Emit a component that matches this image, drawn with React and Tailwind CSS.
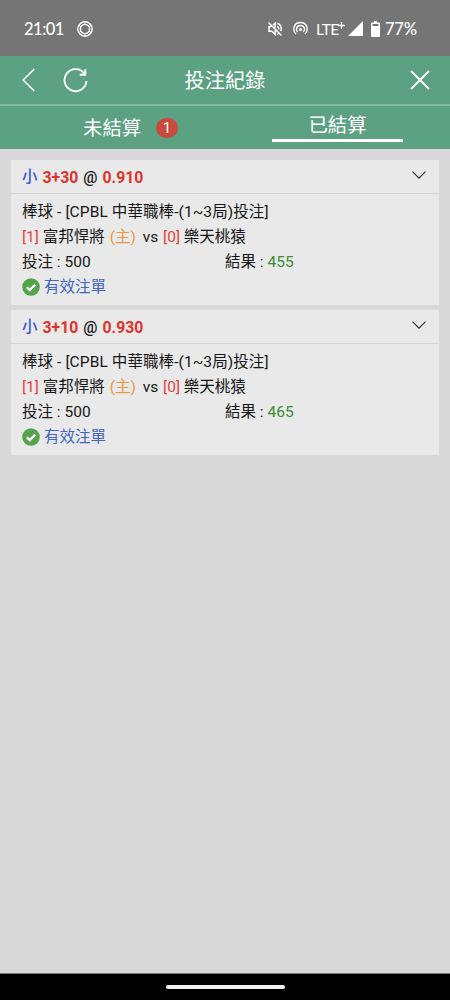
const bets = [
  { id: 1, handicap: "3+30", odds: "0.910", stake: 500, result: 455 },
  { id: 2, handicap: "3+10", odds: "0.930", stake: 500, result: 465 },
];

const StatusBar = () => (
  <div className="flex h-14 shrink-0 items-center justify-between bg-[#757575] pl-6 pr-8 pt-px text-white">
    <div className="flex items-center gap-[14px]">
      <span className="w-[39px] whitespace-nowrap font-[Lato] text-[16.500px] font-medium leading-5 tracking-[-0.5px]">21:01</span>
      <svg className="h-4 w-4" viewBox="0 0 16 16" fill="none" stroke="currentColor">
        <circle cx="8" cy="8" r="7.2" strokeWidth="1.4" />
        <circle cx="8" cy="8" r="4.8" strokeWidth="1.1" />
        <path d="M8 3.200L12.200 5.600V10.400L8 12.800L3.800 10.400V5.600zM8 1v2.200M14.300 4.500l-2.100 1.100M14.300 11.500l-2.100-1.100M8 15v-2.200M1.700 11.500l2.100-1.100M1.700 4.500l2.100 1.100" strokeWidth="0.8" />
      </svg>
    </div>

    <div className="flex items-center">
      {/* muted */}
      <svg className="mr-[10px] h-4 w-4" viewBox="0 0 16 16" fill="none" stroke="currentColor" strokeWidth="1.5">
        <path d="M1.5 1.5l13 13M4.6 5.5H2v4.8h2.8l3.4 3.2V9.2M6 4.3l2.2-2v4.2M10.3 5.4c1.1.6 1.6 1.6 1.5 3M10.3 2.2c3.4 1 4.9 4.7 3.3 8M10.3 13.4l1.2-.5" />
      </svg>
      {/* hotspot */}
      <svg className="mr-[8px] h-[15px] w-[15px]" viewBox="0 0 15 15" fill="none" stroke="currentColor" strokeWidth="1.4">
        <path d="M3 13C-.6 9.8.2 1.5 7.5 1.5S15.6 9.8 12 13" />
        <path d="M4.6 11C2.3 8.8 3.5 4.5 7.5 4.5S12.7 8.8 10.4 11" />
        <circle cx="7.5" cy="8.6" r="1.5" fill="currentColor" stroke="none" />
      </svg>
      <span className="w-[21px] whitespace-nowrap font-[Lato] text-[15.500px] leading-5 tracking-[-0.7px]">LTE</span>
      <svg className="mb-1.5 ml-px mr-[3px] h-[7px] w-[7px]" viewBox="0 0 7 7" stroke="currentColor" strokeWidth="1.3">
        <path d="M3.5 0v7M0 3.5h7" />
      </svg>
      <svg className="mr-[8px] h-[15px] w-[15px]" viewBox="0 0 15 15" fill="currentColor">
        <path d="M15 0v15H0z" />
      </svg>
      <svg className="mr-[5px] h-4 w-[9px]" viewBox="0 0 9 16">
        <path d="M3 0h3v1.5h2a1 1 0 0 1 1 1V15a1 1 0 0 1-1 1H1a1 1 0 0 1-1-1V2.500a1 1 0 0 1 1-1h2z" fill="currentColor" />
        <path d="M1.5 3h6v2h-6z" fill="#757575" />
      </svg>
      <span className="w-[33px] whitespace-nowrap font-[Lato] text-[16.500px] font-medium leading-5 tracking-[-0.2px]">77%</span>
    </div>
  </div>
);

const Header = () => (
  <header className="flex h-[50px] shrink-0 items-center border-b-2 border-[#83b8a1] pl-[22px] pr-[20px]">
    <svg className="mr-[28px] h-6 w-[13px]" viewBox="0 0 13 24" fill="none" stroke="currentColor" strokeWidth="1.7">
      <path d="M12.200 1L1.200 12l11 11" />
    </svg>
    <svg className="h-[25px] w-[25px]" viewBox="0 0 25 25" fill="none" stroke="currentColor" strokeWidth="1.9">
      <path d="M21.500 5.800A11 11 0 1 0 23.500 13" />
      <path d="M22.300 1.300v5.500h-5.500" />
    </svg>
    <h1 className="flex-1 pl-[8px] pr-[56px] pt-0.5 text-center text-[20.300px] leading-7">投注紀錄</h1>
    <svg className="h-5 w-5" viewBox="0 0 20 20" fill="none" stroke="currentColor" strokeWidth="1.9">
      <path d="M1 1l18 18M19 1L1 19" />
    </svg>
  </header>
);

const Tabs = () => (
  <nav className="grid h-[43px] shrink-0 grid-cols-2 text-[19.400px]">
    <div className="flex items-center pl-[83px]">
      <span className="w-[58px] whitespace-nowrap pt-0.5 leading-7">未結算</span>
      <span className="ml-[15px] flex h-[20px] w-[22px] items-center justify-center rounded-full bg-[#c9493f] font-[Roboto] text-[15px] leading-5">1</span>
    </div>
    <div className="flex flex-col items-center">
      <span className="mt-[3px] h-[30px] leading-[33px]">已結算</span>
      <span className="h-[3px] w-[131px] bg-white" />
    </div>
  </nav>
);

const BetCard = ({ bet }) => (
  <div className="h-[145px] bg-[#e9e9e9] text-[15.500px] leading-[25px] text-[#161616]">
    <div className="flex h-[34px] items-center justify-between border-b border-[#d5d5d5] pl-[11px] pr-[13px] font-bold">
      <div className="flex gap-[5px] whitespace-nowrap pt-px">
        <span className="font-medium text-[#3558cf]">小</span>
        <span className="text-[15.800px] text-[#dd342c]">{bet.handicap}</span>
        <span className="text-[15.800px] font-medium">@</span>
        <span className="text-[15.800px] text-[#dd342c]">{bet.odds}</span>
      </div>
      <svg className="mb-[4px] h-2 w-[14px]" viewBox="0 0 14 8" fill="none" stroke="#333" strokeWidth="1.2">
        <path d="M.5.7L7 7.200 13.500.7" />
      </svg>
    </div>
    <div className="whitespace-pre px-[11px] pt-[6px]">
      <div className="tracking-[0.09px]">棒球 - [CPBL 中華職棒-(1~3局)投注]</div>
      <div>
        <span className="text-[#dd4640]">[1]</span> 富邦悍將 <span className="ml-px mr-[3px] text-[#e89a45]">(主)</span> vs{" "}
        <span className="ml-px text-[#dd4640]">[0]</span> 樂天桃猿
      </div>
      <div className="flex">
        <div className="w-[203px]">投注 : {bet.stake}</div>
        <div>結果 : <span className="text-[#3d8b32]">{bet.result}</span></div>
      </div>
      <div className="flex items-center gap-[4px] text-[#4264c4]">
        <svg className="mb-px h-[18px] w-[18px]" viewBox="0 0 18 18" fill="none">
          <circle cx="9" cy="9" r="8.800" fill="#55a44c" />
          <path d="M4.800 9.200l2.900 2.900 5.500-5.500" stroke="#fff" strokeWidth="2.200" />
        </svg>
        有效注單
      </div>
    </div>
  </div>
);

export default function App() {
  return (
    <div className="flex h-[1000px] w-[450px] flex-col overflow-hidden bg-[#d8d8d8] font-[Roboto,'Noto_Sans_CJK_TC',sans-serif]">
      <StatusBar />
      <div className="flex flex-col bg-[#5da183] text-white">
        <Header />
        <Tabs />
      </div>

      <main className="flex flex-1 flex-col gap-[5px] px-[11px] pt-[11px]">
        {bets.map((bet) => (
          <BetCard key={bet.id} bet={bet} />
        ))}
      </main>

      {/* Gesture bar */}
      <div className="flex h-[27px] shrink-0 items-center justify-center border-t border-[#777] bg-black">
        <div className="h-1 w-[119px] rounded-full bg-[#f2f2f2]" />
      </div>
    </div>
  );
}
